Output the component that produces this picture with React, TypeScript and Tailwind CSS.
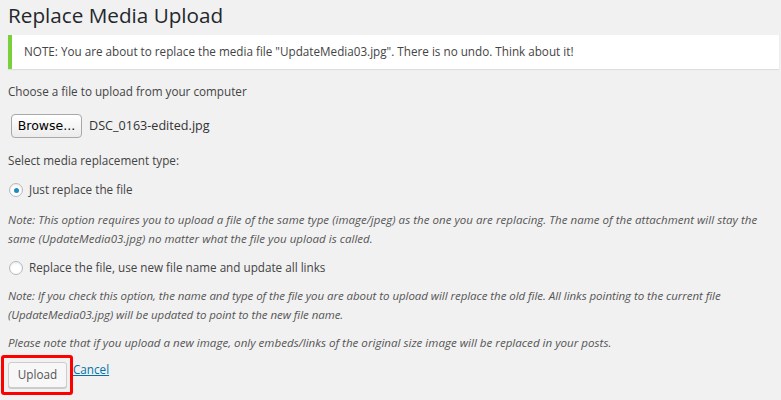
import { useState } from 'react';

export default function App() {
  const [mode, setMode] = useState('replace');

  return (
    <div className="min-h-[400px] bg-[#f1f1f1] pl-[8px] pr-[2px] text-[11.7px] text-[#444] font-['Open_Sans',sans-serif]">
      <h2 className="pt-[1px] text-[20.7px] leading-[28px] font-normal text-[#23282d]">Replace Media Upload</h2>

      <div className="mt-[6px] h-[34px] flex items-center bg-white border-l-4 border-[#7ad03a] pl-[12px] shadow-[0_1px_1px_rgba(0,0,0,0.08)]">
        NOTE: You are about to replace the media file "UpdateMedia03.jpg". There is no undo. Think about it!
      </div>

      <p className="mt-[12px] leading-[20px]">Choose a file to upload from your computer</p>

      <div className="mt-[13px] flex items-center h-[24px]">
        <button
          type="button"
          className="ml-[3px] h-[24px] w-[71px] rounded-[4px] border border-[#a8a8a8] bg-gradient-to-b from-white to-[#ececec] text-[12.5px] text-black font-['DejaVu_Sans',sans-serif]"
        >
          Browse...
        </button>
        <span className="ml-[7px] text-[12.6px] text-[#333]">DSC_0163-edited.jpg</span>
      </div>

      <p className="mt-[12px] leading-[20px]">Select media replacement type:</p>

      <label className="mt-[10px] flex items-center h-[20px] cursor-pointer" onClick={() => setMode('replace')}>
        <Radio checked={mode === 'replace'} />
        <span className="ml-[6px]">Just replace the file</span>
      </label>

      <p className="mt-[10px] leading-[19px] italic text-[11.5px] tracking-[0.04px] text-[#555] whitespace-nowrap">
        Note: This option requires you to upload a file of the same type (image/jpeg) as the one you are replacing. The name of the attachment will stay the
        <br />
        same (UpdateMedia03.jpg) no matter what the file you upload is called.
      </p>

      <label className="mt-[10px] flex items-center h-[20px] cursor-pointer" onClick={() => setMode('rename')}>
        <Radio checked={mode === 'rename'} />
        <span className="ml-[6px]">Replace the file, use new file name and update all links</span>
      </label>

      <p className="mt-[8px] leading-[19px] italic text-[11.5px] tracking-[-0.05px] text-[#555] whitespace-nowrap">
        Note: If you check this option, the name and type of the file you are about to upload will replace the old file. All links pointing to the current file
        <br />
        (UpdateMedia03.jpg) will be updated to point to the new file name.
      </p>

      <p className="mt-[9px] leading-[19px] italic text-[11.6px] text-[#555]">
        Please note that if you upload a new image, only embeds/links of the original size image will be replaced in your posts.
      </p>

      <div className="mt-[3px] flex items-start">
        <div className="-ml-[7px] border-[3px] border-[#ff0000] rounded-[3px] pt-[4px] pb-[4px] pl-[4px] pr-[3px]">
          <button
            type="button"
            className="h-[26px] w-[59px] rounded-[3px] border border-[#cccccc] bg-[#f7f7f7] text-[11.7px] text-[#555] shadow-[0_1px_0_#ccc]"
          >
            Upload
          </button>
        </div>
        <a href="#" className="mt-[4px] text-[#0073aa] underline leading-[20px]">Cancel</a>
      </div>
    </div>
  );
}

function Radio({ checked }: { checked: boolean }) {
  return (
    <span className="ml-[1px] w-[14px] h-[14px] rounded-full border border-[#b4b9be] bg-white shadow-[inset_0_1px_2px_rgba(0,0,0,0.1)] flex items-center justify-center">
      {checked && <span className="w-[5px] h-[5px] rounded-full bg-[#1e8cbe]" />}
    </span>
  );
}
